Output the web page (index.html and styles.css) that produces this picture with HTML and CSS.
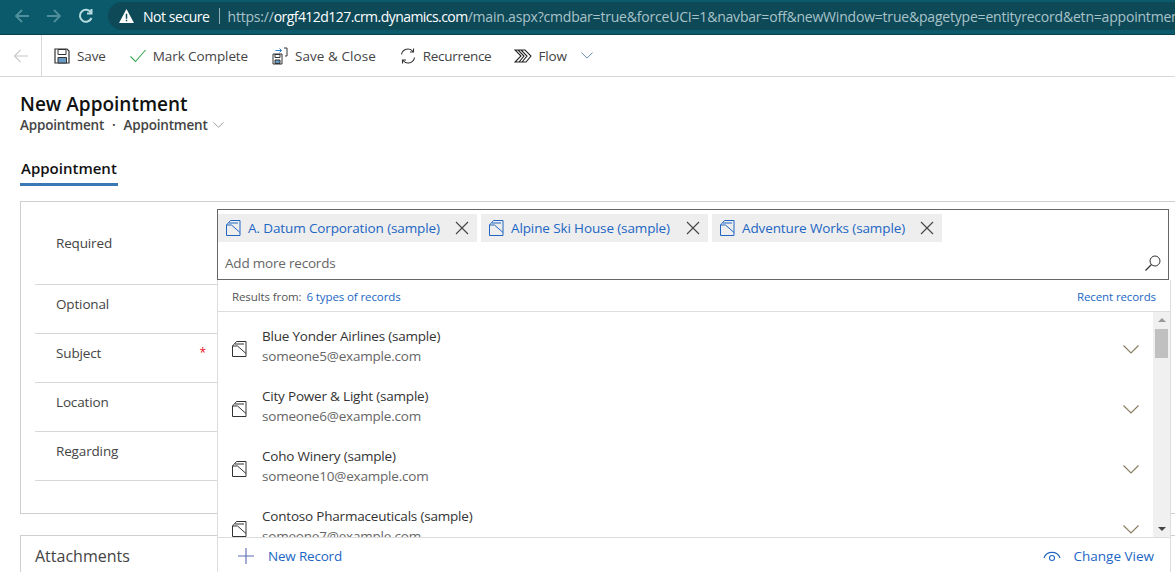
FILE: index.html
```html
<!DOCTYPE html>
<html>
<head>
    <title>New Appointment</title>
    <link rel="stylesheet" href="styles.css">
</head>
<body>
    <svg class="icon_defs" width="0" height="0">
        <symbol id="entity" viewBox="0 0 15 16">
            <path d="M.5 5v10.500h13.500V.5H4.500L.5 5h5l8.500 7.500M3 3h9" fill="none" stroke="currentColor"/>
        </symbol>
        <symbol id="close" viewBox="0 0 14 14">
            <path d="M1 1l12 12M13 1L1 13" fill="none" stroke="currentColor" stroke-width="1.100"/>
        </symbol>
        <symbol id="chevron" viewBox="0 0 16 9">
            <path d="M.5.500l7.500 7.500 7.500-7.500" fill="none" stroke="currentColor" stroke-width="1.200"/>
        </symbol>
    </svg>

    <div class="browser_bar">
        <svg class="browser_icon nav_dim" viewBox="0 0 16 16"><path d="M15 8H2M8 2L2 8l6 6" fill="none" stroke="currentColor" stroke-width="1.800"/></svg>
        <svg class="browser_icon nav_dim" viewBox="0 0 16 16"><path d="M1 8h13M8 2l6 6-6 6" fill="none" stroke="currentColor" stroke-width="1.800"/></svg>
        <svg class="browser_icon nav_reload" viewBox="0 0 16 16"><path d="M13.500 10a6 6 0 1 1-.5-5.500M13.500 1v4.500H9" fill="none" stroke="currentColor" stroke-width="2"/></svg>
        <div class="address_pill">
            <svg class="warning_icon" viewBox="0 0 14 13"><path d="M7 0l7 13H0z" fill="#fff"/><path d="M6.300 4.500h1.400v4.500H6.300zM6.300 10h1.400v1.500H6.300z" fill="#0e4958"/></svg>
            <span class="not_secure">Not secure</span>
            <span class="address_sep"></span>
            <span class="url">https://<b>orgf412d127.crm.dynamics.com</b>/main.aspx?cmdbar=true&amp;forceUCI=1&amp;navbar=off&amp;newWindow=true&amp;pagetype=entityrecord&amp;etn=appointment</span>
        </div>
    </div>

    <div class="command_bar">
        <div class="command_back">
            <svg class="back_icon" viewBox="0 0 16 14"><path d="M15 7H1.500M7.500 1L1.500 7l6 6" fill="none" stroke="currentColor" stroke-width="1.100"/></svg>
        </div>
        <div class="command save">
            <svg viewBox="0 0 16 16"><path d="M1 1h12l2 2v12H1z" fill="#fff" stroke="#333" stroke-width="1.200"/><path d="M4 1.500h8v5H4z" fill="#fff" stroke="#333"/><path d="M4 9.500h8.500V15H4z" fill="#6a9bc4" stroke="#333"/></svg>
            <span>Save</span>
        </div>
        <div class="command mark">
            <svg viewBox="0 0 16 14"><path d="M.5 7.500L5.500 12.500 15.500 1" fill="none" stroke="#3aa655" stroke-width="1.100"/></svg>
            <span>Mark Complete</span>
        </div>
        <div class="command close">
            <svg viewBox="0 0 16 18"><path d="M1 7h9v10H1z" fill="#fff" stroke="#333"/><path d="M3 7.500h5v3H3z" fill="none" stroke="#333"/><path d="M3 13h5v3.500H3z" fill="#6a9bc4" stroke="#333"/><path d="M3.500 3.500h6M7.500 1.500l2 2-2 2" fill="none" stroke="#2b7cd3"/><path d="M12 1h3v8h-2" fill="none" stroke="#333"/></svg>
            <span>Save &amp; Close</span>
        </div>
        <div class="command recur">
            <svg viewBox="0 0 16 16"><path d="M1.500 6.500A6.500 6.500 0 0 1 13 3.500M14.500 9.500A6.500 6.500 0 0 1 3 12.500M13.500 .5v3.500h-3.500M2.500 15.500v-3.500h3.500" fill="none" stroke="#333" stroke-width="1.100"/></svg>
            <span>Recurrence</span>
        </div>
        <div class="command flow">
            <svg viewBox="0 0 18 14"><path d="M1 1h10l6 6-5 6H1l6-6zM4 1l6 6-5 6M7 1l6 6-5 6" fill="none" stroke="#222" stroke-width="1.100"/></svg>
            <span>Flow</span>
            <svg class="flow_chevron"><use href="#chevron"/></svg>
        </div>
    </div>

    <div class="page_content">
        <h1 class="form_title">New Appointment</h1>
        <div class="form_sub">
            <span>Appointment</span>
            <span class="sub_dot">·</span>
            <span>Appointment</span>
            <svg class="sub_chevron"><use href="#chevron"/></svg>
        </div>
        <div class="tab_list">
            <div class="tab_active">Appointment</div>
        </div>

        <div class="form_card">
            <div class="form_row row_required"><span class="form_label">Required</span></div>
            <div class="form_row"><span class="form_label">Optional</span></div>
            <div class="form_row"><span class="form_label">Subject</span><span class="required_mark">*</span></div>
            <div class="form_row"><span class="form_label">Location</span></div>
            <div class="form_row"><span class="form_label">Regarding</span></div>

            <div class="lookup">
                <div class="lookup_box">
                    <div class="chip_list">
                        <div class="chip chip_1">
                            <svg class="chip_entity"><use href="#entity"/></svg>
                            <span class="chip_text">A. Datum Corporation (sample)</span>
                            <svg class="chip_close"><use href="#close"/></svg>
                        </div>
                        <div class="chip chip_2">
                            <svg class="chip_entity"><use href="#entity"/></svg>
                            <span class="chip_text">Alpine Ski House (sample)</span>
                            <svg class="chip_close"><use href="#close"/></svg>
                        </div>
                        <div class="chip chip_3">
                            <svg class="chip_entity"><use href="#entity"/></svg>
                            <span class="chip_text">Adventure Works (sample)</span>
                            <svg class="chip_close"><use href="#close"/></svg>
                        </div>
                    </div>
                    <div class="lookup_input">
                        <span>Add more records</span>
                        <svg class="search_icon" viewBox="0 0 16 16"><circle cx="10" cy="6" r="5" fill="none" stroke="#333"/><path d="M6.500 9.500L.5 15.500" fill="none" stroke="#333" stroke-width="1.200"/></svg>
                    </div>
                </div>
                <div class="flyout">
                    <div class="flyout_head">
                        <span class="results_from">Results from:</span>
                        <span class="flyout_link">6 types of records</span>
                        <span class="flyout_link recent">Recent records</span>
                    </div>
                    <div class="flyout_body">
                        <div class="record_list">
                            <div class="record">
                                <svg class="record_icon"><use href="#entity"/></svg>
                                <div class="record_text"><div class="record_name">Blue Yonder Airlines (sample)</div><div class="record_mail">someone5@example.com</div></div>
                                <svg class="record_chevron"><use href="#chevron"/></svg>
                            </div>
                            <div class="record">
                                <svg class="record_icon"><use href="#entity"/></svg>
                                <div class="record_text"><div class="record_name">City Power &amp; Light (sample)</div><div class="record_mail">someone6@example.com</div></div>
                                <svg class="record_chevron"><use href="#chevron"/></svg>
                            </div>
                            <div class="record">
                                <svg class="record_icon"><use href="#entity"/></svg>
                                <div class="record_text"><div class="record_name">Coho Winery (sample)</div><div class="record_mail">someone10@example.com</div></div>
                                <svg class="record_chevron"><use href="#chevron"/></svg>
                            </div>
                            <div class="record">
                                <svg class="record_icon"><use href="#entity"/></svg>
                                <div class="record_text"><div class="record_name">Contoso Pharmaceuticals (sample)</div><div class="record_mail">someone7@example.com</div></div>
                                <svg class="record_chevron"><use href="#chevron"/></svg>
                            </div>
                        </div>
                        <div class="scroll_track">
                            <div class="scroll_up"></div>
                            <div class="scroll_thumb"></div>
                            <div class="scroll_down"></div>
                        </div>
                    </div>
                    <div class="flyout_foot">
                        <svg class="plus_icon" viewBox="0 0 16 16"><path d="M8 0v16M0 8h16" fill="none" stroke="#5a6bb0" stroke-width="1.100"/></svg>
                        <span class="flyout_action">New Record</span>
                        <svg class="eye_icon" viewBox="0 0 18 12"><path d="M1 8a8.500 8.500 0 0 1 16 0" fill="none" stroke="#2266c4" stroke-width="1.100"/><circle cx="9" cy="8" r="2.500" fill="none" stroke="#2266c4" stroke-width="1.100"/></svg>
                        <span class="flyout_action change_view">Change View</span>
                    </div>
                </div>
            </div>
        </div>

        <div class="attach_card">
            <div class="attach_title">Attachments</div>
        </div>
    </div>
</body>
</html>
```

FILE: styles.css
```css
* {
    box-sizing: border-box;
    font-family: "Open Sans", "Noto Sans", sans-serif;
}
html, body {
    margin: 0;
    height: 572px;
    overflow: hidden;
    background: #fff;
}
.icon_defs {
    position: absolute;
}

/* browser chrome */
.browser_bar {
    display: flex;
    align-items: center;
    height: 35px;
    padding: 2px 0 4px 14px;
    background: #0b5a6c;
    border-bottom: 1px solid #083f4c;
}
.browser_icon {
    width: 16px;
    height: 16px;
    margin-right: 16px;
    flex: none;
}
.nav_dim {
    color: #4f8f9c;
}
.nav_reload {
    color: #b8dbe0;
    margin-right: 14px;
}
.address_pill {
    display: flex;
    flex: 1;
    align-items: center;
    height: 28px;
    min-width: 0;
    margin-right: -10px;
    padding-left: 11px;
    border-radius: 14px 0 0 14px;
    background: #0e4958;
    white-space: nowrap;
    overflow: hidden;
}
.warning_icon {
    width: 15px;
    height: 14px;
    margin-right: 9px;
    flex: none;
}
.not_secure {
    color: #fff;
    font-size: 14px;
    letter-spacing: -.45px;
}
.address_sep {
    width: 1px;
    height: 16px;
    margin: 0 8px 0 9px;
    background: #8fb0b8;
    flex: none;
}
.url {
    color: #a9c3c8;
    font-size: 14px;
    letter-spacing: -.2px;
}
.url b {
    color: #fff;
    font-weight: 400;
    letter-spacing: -.55px;
}

/* command bar */
.command_bar {
    display: flex;
    align-items: center;
    height: 42px;
    border-bottom: 1px solid #d8d8d8;
    color: #444;
}
.command_back {
    display: flex;
    align-items: center;
    justify-content: center;
    width: 42px;
    height: 41px;
    border-right: 1px solid #d8d8d8;
    color: #c8c8c8;
}
.back_icon {
    width: 16px;
    height: 14px;
}
.command {
    display: flex;
    align-items: center;
    font-size: 13.500px;
    letter-spacing: -.1px;
}
.command svg {
    width: 16px;
    height: 16px;
    margin-right: 7px;
}
.save {
    margin-left: 12px;
}
.mark, .close, .recur {
    margin-left: 24px;
}
.flow {
    margin-left: 23px;
}
.close {
    letter-spacing: .05px;
}
.recur {
    letter-spacing: -.3px;
}
.command.close svg {
    height: 18px;
}
.command.flow svg {
    width: 18px;
    height: 14px;
    margin-right: 6px;
}
.command.flow .flow_chevron {
    width: 12px;
    height: 7px;
    margin: 0 0 0 14px;
    color: #5a7fa8;
}

/* header */
.page_content {
    padding: 15px 0 0 20px;
    width: 1200px;
}
.form_title {
    margin: 0;
    font-size: 19px;
    font-weight: 600;
    line-height: 24px;
    color: #111;
}
.form_sub {
    display: flex;
    align-items: center;
    height: 18px;
    font-size: 13.500px;
    font-weight: 600;
    letter-spacing: -.2px;
    color: #444;
}
.sub_dot {
    margin: 0 8px;
}
.sub_chevron {
    width: 11px;
    height: 6px;
    margin-left: 5px;
    color: #888;
}
.tab_list {
    display: flex;
    height: 52px;
    padding-top: 25px;
}
.tab_active {
    height: 27px;
    font-size: 15px;
    font-weight: 600;
    line-height: 18px;
    padding: 0 1px;
    color: #111;
    border-bottom: 3px solid #3a78b5;
}

/* form */
.form_card {
    position: relative;
    height: 313px;
    margin-top: 15px;
    padding: 0 0 0 14px;
    border: 1px solid #cfcfcf;
}
.form_row {
    display: flex;
    align-items: center;
    width: 182px;
    height: 49px;
    padding-left: 21px;
    border-bottom: 1px solid #d8d8d8;
    font-size: 13.500px;
    letter-spacing: -.15px;
    color: #444;
}
.form_label {
    flex: 1;
    padding-bottom: 10px;
}
.row_required {
    height: 83px;
}
.row_required .form_label {
    padding-bottom: 0;
}
.required_mark {
    margin: -12px 11px 0 0;
    color: #e81123;
    font-size: 12px;
}

/* lookup, sits over the form */
.lookup {
    position: absolute;
    left: 196px;
    top: 7px;
    width: 954px;
}
.lookup_box {
    width: 952px;
    height: 71px;
    background: #fff;
    border: 1px solid #666;
}
.chip_list {
    display: flex;
    gap: 4px;
    padding-top: 4px;
}
.chip {
    display: flex;
    align-items: center;
    height: 28px;
    background: #eee;
    color: #2266c4;
}
.chip_1 {
    width: 259px;
}
.chip_2 {
    width: 227px;
}
.chip_3 {
    width: 230px;
}
.chip_entity {
    width: 15px;
    height: 16px;
    margin: 0 7px 0 8px;
    flex: none;
}
.chip_text {
    flex: 1;
    font-size: 13.500px;
    letter-spacing: -.12px;
    white-space: nowrap;
}
.chip_close {
    width: 14px;
    height: 14px;
    margin-right: 8px;
    color: #444;
    flex: none;
}
.lookup_input {
    display: flex;
    align-items: center;
    justify-content: space-between;
    height: 36px;
    padding: 6px 7px 0 7px;
    font-size: 13.500px;
    letter-spacing: -.2px;
    color: #666;
}
.search_icon {
    width: 16px;
    height: 16px;
}
.flyout {
    display: flex;
    flex-direction: column;
    height: 300px;
    background: #fff;
    border: 1px solid #ddd;
    border-top: 0;
}
.flyout_head {
    display: flex;
    align-items: center;
    flex: none;
    height: 32px;
    padding: 2px 14px 0 14px;
    border-bottom: 1px solid #ddd;
    font-size: 11.500px;
    letter-spacing: -.1px;
    color: #555;
}
.results_from {
    margin-right: 5px;
}
.flyout_link {
    color: #2266c4;
}
.recent {
    margin-left: auto;
}
.flyout_body {
    display: flex;
    flex: none;
    height: 225px;
    overflow: hidden;
}
.record_list {
    flex: 1;
    padding-top: 7px;
}
.record {
    display: flex;
    align-items: center;
    height: 60px;
    padding: 0 14px 0 14px;
}
.record_icon {
    width: 15px;
    height: 16px;
    margin-right: 15px;
    color: #333;
    flex: none;
}
.record_text {
    flex: 1;
    margin-top: -6px;
}
.record_name {
    font-size: 13.500px;
    letter-spacing: -.2px;
    line-height: 20px;
    color: #333;
}
.record_mail {
    font-size: 13.500px;
    letter-spacing: -.2px;
    line-height: 20px;
    color: #666;
}
.record_chevron {
    width: 16px;
    height: 9px;
    color: #8a7f62;
}
.scroll_track {
    display: flex;
    flex-direction: column;
    align-items: center;
    width: 17px;
    background: #f0f0f0;
}
.scroll_up {
    margin-top: 6px;
    border: 4px solid transparent;
    border-top: 0;
    border-bottom: 4px solid #999;
}
.scroll_thumb {
    width: 13px;
    height: 29px;
    margin-top: 7px;
    background: #c0c0c0;
}
.scroll_down {
    margin-top: auto;
    margin-bottom: 6px;
    border: 4px solid transparent;
    border-bottom: 0;
    border-top: 4px solid #444;
}
.flyout_foot {
    display: flex;
    align-items: center;
    flex: none;
    height: 38px;
    padding: 0 16px 2px 20px;
    border-top: 1px solid #ddd;
    background: #fff;
}
.plus_icon {
    width: 16px;
    height: 16px;
    margin-right: 14px;
}
.eye_icon {
    width: 18px;
    height: 12px;
    margin: 0 13px 0 auto;
}
.flyout_action {
    font-size: 13.500px;
    letter-spacing: -.2px;
    color: #2266c4;
}
.change_view {
    letter-spacing: 0;
}

/* attachments */
.attach_card {
    height: 60px;
    margin-top: 21px;
    padding: 9px 14px;
    border: 1px solid #cfcfcf;
}
.attach_title {
    font-size: 16px;
    color: #444;
}
```
